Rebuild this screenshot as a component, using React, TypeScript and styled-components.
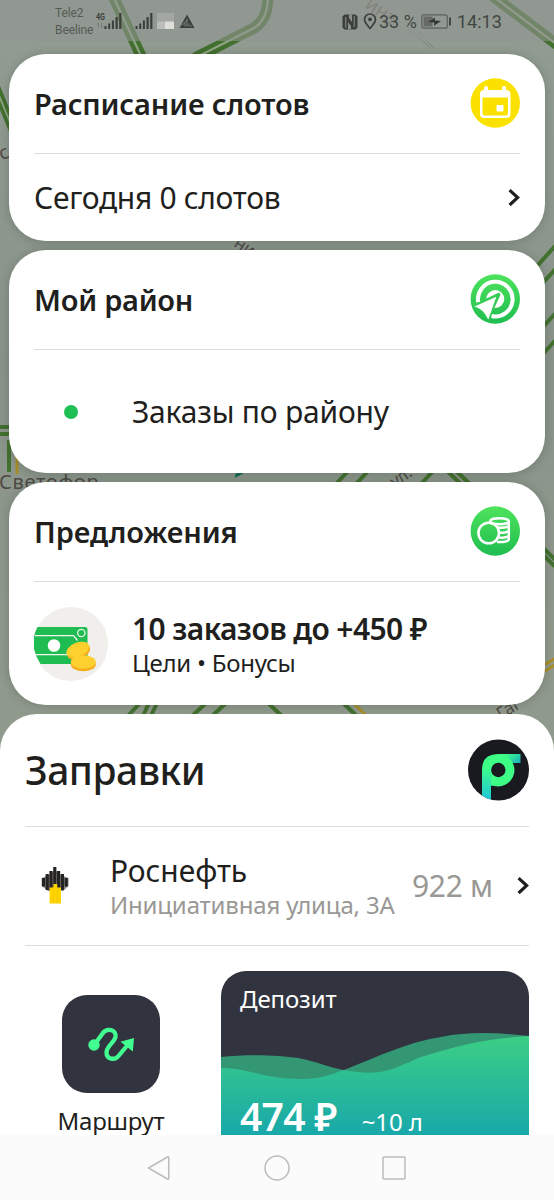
import React from "react";
import styled, { createGlobalStyle } from "styled-components";

const GlobalStyle = createGlobalStyle`
  *, *::before, *::after { box-sizing: border-box; }
  body { margin: 0; background: #89958a; }
  svg { display: block; flex: none; }
`;

const Screen = styled.div`
  position: relative;
  display: flex;
  flex-direction: column;
  width: 554px;
  height: 1200px;
  overflow: hidden;
  background: #8a958a;
  color: #1f1f1e;
  font-family: "Noto Sans", "Open Sans", sans-serif;
`;

const MapBackdrop = styled.svg`
  position: absolute;
  inset: 0;
`;

const StatusBar = styled.header`
  position: relative;
  display: flex;
  align-items: center;
  flex: none;
  height: 41px;
  padding: 2px 52px 0 55px;
  background: rgba(145, 148, 145, 0.6);
  color: #424642;
  font-family: Roboto, sans-serif;
`;

const Carriers = styled.div`
  width: 40px;
  font-size: 12px;
  line-height: 17px;
  letter-spacing: -0.1px;
  color: #555a55;
  white-space: nowrap;
`;

const StatusIcons = styled.div`
  display: flex;
  align-items: center;
  margin-top: -1px;
`;

const StatusRight = styled.div`
  display: flex;
  align-items: center;
  margin-left: auto;
`;

const StatusText = styled.span<{ $width: number; $left: number }>`
  width: ${(p) => p.$width}px;
  margin-left: ${(p) => p.$left}px;
  font-size: 18px;
  line-height: 22px;
  white-space: nowrap;
`;

const CardStack = styled.main`
  position: relative;
  display: flex;
  flex-direction: column;
  gap: 9px;
  flex: none;
  padding: 13px 9px 9px;
`;

const Card = styled.section<{ $height: number }>`
  display: flex;
  flex-direction: column;
  height: ${(p) => p.$height}px;
  padding: 0 25px;
  border-radius: 37px;
  background: #fff;
  box-shadow: 0 1px 10px rgba(20, 30, 20, 0.22);
`;

const CardHeader = styled.div<{ $height: number }>`
  display: flex;
  align-items: center;
  justify-content: space-between;
  flex: none;
  height: ${(p) => p.$height}px;
  border-bottom: 1.5px solid #dcdcdc;
`;

const HeaderIcon = styled.div`
  padding-bottom: 2px;
`;

const Text = styled.div<{ $size: number; $track?: number; $weight?: number; $color?: string; $line?: number }>`
  font-size: ${(p) => p.$size}px;
  font-weight: ${(p) => p.$weight ?? 400};
  letter-spacing: ${(p) => p.$track ?? 0}px;
  line-height: ${(p) => p.$line ?? 40}px;
  color: ${(p) => p.$color ?? "inherit"};
  white-space: nowrap;
`;

const Row = styled.div`
  display: flex;
  align-items: center;
  flex: 1;
`;

const SpacedRow = styled(Row)`
  justify-content: space-between;
`;

const Leading = styled.div<{ $width: number }>`
  display: flex;
  align-items: center;
  flex: none;
  width: ${(p) => p.$width}px;
`;

const OfferText = styled.div`
  padding-top: 2px;
`;

const Dot = styled.span`
  width: 14px;
  height: 14px;
  margin-left: 30px;
  border-radius: 50%;
  background: #1fbf54;
`;

const Panel = styled.section`
  position: relative;
  display: flex;
  flex-direction: column;
  flex: 1;
  min-height: 0;
  padding: 0 25px;
  overflow: hidden;
  border-radius: 37px 37px 0 0;
  background: #fff;
`;

const StationRow = styled.div`
  display: flex;
  align-items: center;
  flex: none;
  height: 119px;
  border-bottom: 1.5px solid #dcdcdc;
`;

const StationIcon = styled.div`
  width: 85px;
  padding: 0 0 1px 16px;
`;

const StationText = styled.div`
  padding-top: 1px;
`;

const Distance = styled.div`
  display: flex;
  align-items: center;
  justify-content: space-between;
  width: 117px;
  margin-left: auto;
`;

const Actions = styled.div`
  display: flex;
  align-items: flex-start;
  justify-content: space-between;
  padding-top: 25px;
`;

const RouteAction = styled.div`
  display: flex;
  flex-direction: column;
  align-items: center;
  gap: 12px;
  width: 172px;
  padding-top: 24px;
`;

const RouteTile = styled.div`
  display: grid;
  place-items: center;
  width: 98px;
  height: 98px;
  border-radius: 25px;
  background: #31343f;
`;

const Deposit = styled.div`
  position: relative;
  display: flex;
  flex-direction: column;
  justify-content: space-between;
  width: 308px;
  height: 169px;
  padding: 12px 19px 0;
  overflow: hidden;
  border-radius: 25px 25px 0 0;
  background: #31343f;
  color: #fff;
`;

const Waves = styled.svg`
  position: absolute;
  left: 0;
  top: 0;
`;

const DepositTitle = styled.div`
  position: relative;
`;

const Amounts = styled.div`
  position: relative;
  display: flex;
  align-items: baseline;
  gap: 25px;
`;

const NavBar = styled.nav`
  position: relative;
  display: flex;
  align-items: center;
  justify-content: space-between;
  flex: none;
  height: 65px;
  padding: 0 148px 0 147px;
  background: #fbfbfb;
`;

const Road = ({ d, width = 11 }: { d: string; width?: number }) => (
  <g fill="none">
    <path d={d} stroke="#42702f" strokeWidth={width} />
    <path d={d} stroke="#8fa585" strokeWidth={width / 5} />
  </g>
);

const MapView = () => (
  <MapBackdrop width="554" height="1200" viewBox="0 0 554 1200">
    <defs>
      <linearGradient id="land" x1="0" y1="0" x2="0" y2="720" gradientUnits="userSpaceOnUse">
        <stop offset="0" stopColor="#929d92" />
        <stop offset="0.5" stopColor="#89938a" />
        <stop offset="1" stopColor="#909a8c" />
      </linearGradient>
    </defs>
    <rect width="554" height="1200" fill="url(#land)" />
    <Road d="M113 -4L142 58" />
    <Road d="M268 -4Q268 24 248 31L195 58" />
    <Road d="M490 -6L564 50" />
    <Road d="M-4 88L14 132" width={9} />
    <path d="M412 26L435 49M408 29L431 48" stroke="#7e877f" strokeWidth="1" />
    <g fill="none" stroke="#42702f" strokeWidth="4">
      <path d="M530 274L564 236M538 288L564 260M540 330L564 304M540 357L564 331" />
      <path d="M0 427H14M0 434H14M9 440V472" />
      <path d="M335 485L351 468M355 485L371 468M420 485L436 468M446 470L462 485M455 470L471 485" />
      <path d="M540 545L564 568M540 552L564 575" />
      <path d="M126 718L140 703M142 718L149 703M150 718L157 703M190 718L206 703M210 718L226 703M268 703L284 718M343 703L359 718" />
    </g>
    <path d="M540 667L560 656M540 674L560 662M353 703L369 718M17 452V474" stroke="#a88d2a" strokeWidth="3" />
    <path d="M235 478L244 473L236 470Z" fill="#176b57" />
    <g fill="#4e4a46" fontFamily="Noto Sans, sans-serif">
      <text x="-1" y="489" fontSize="20" letterSpacing="0.7">Светофор</text>
      <text x="364" y="7" fontSize="19" transform="rotate(34 364 7)" fill="#70665f">инз</text>
      <text x="-9" y="164" fontSize="19" transform="rotate(-20 -9 164)">лс</text>
      <text x="233" y="246" fontSize="17" transform="rotate(32 233 246)">ни</text>
      <text x="395" y="488" fontSize="17" transform="rotate(-35 395 488)">ул.</text>
      <text x="501" y="720" fontSize="17" transform="rotate(-32 501 720)">Гаг</text>
    </g>
  </MapBackdrop>
);

const SignalBars = () => (
  <g fill="#3b3f3b">
    <rect x="0" y="13" width="2" height="3" />
    <rect x="3.7" y="10.5" width="2" height="5.5" />
    <rect x="7.4" y="7.5" width="2" height="8.5" />
    <rect x="11" y="4" width="2.2" height="12" />
    <rect x="14.7" y="0" width="2.2" height="16" />
  </g>
);

const CarrierIcons = () => (
  <svg width="100" height="20" viewBox="0 0 100 20">
    <text x="1" y="9" fontSize="9.5" fontWeight="700" fontFamily="Roboto, sans-serif" textLength="9" lengthAdjust="spacingAndGlyphs" fill="#3b3f3b">4G</text>
    <path d="M3.5 16.5V12M2 13.5L3.5 12M6.5 12V16.5L8 15" stroke="#777c77" fill="none" />
    <g transform="translate(9.5 2)"><SignalBars /></g>
    <g transform="translate(40.5 2)"><SignalBars /></g>
    <rect x="62" y="2" width="17" height="8.5" fill="#a3a7a3" />
    <rect x="62" y="10.5" width="8" height="7.5" fill="#bbbdb9" />
    <rect x="70" y="10.5" width="9" height="7.5" fill="#deded9" />
    <path d="M92 3.5L99.5 17H84.5Z" fill="#3b3f3b" />
    <path d="M90 15.5V12M92 15.5V7.5M94 15.5V12.5M96 15.5V14M87 14.5L92 9" stroke="#8d938d" strokeWidth="0.8" fill="none" />
  </svg>
);

const NfcIcon = () => (
  <svg width="16" height="16" viewBox="0 0 16 16">
    <path d="M2.5 0.5H13.5L15.5 2.5V13.5L13.5 15.5H2.5L0.5 13.5V2.5Z" fill="#3c403c" />
    <path d="M3.8 14V3M12.2 13V2" stroke="#8b908b" strokeWidth="1" fill="none" />
    <path d="M6 15.5V8L9 12V15.5ZM7 0.5H10V8L7 4Z" fill="#8b908b" />
  </svg>
);

const PinSvg = styled.svg`
  margin-left: 5px;
`;

const PinIcon = () => (
  <PinSvg width="14" height="17" viewBox="0 0 14 17">
    <path d="M7 15.5C4.5 12.5 1.5 9.5 1.5 6.3a5.5 5.3 0 0 1 11 0C12.5 9.5 9.5 12.5 7 15.5Z" fill="none" stroke="#3c403c" strokeWidth="1.7" />
    <circle cx="7" cy="6.3" r="1.9" fill="#3c403c" />
  </PinSvg>
);

const BatteryIcon = () => (
  <svg width="31" height="15" viewBox="0 0 31 15">
    <rect x="0.8" y="0.8" width="25.5" height="13.4" rx="2" fill="none" stroke="#5b605b" strokeWidth="1.2" />
    <rect x="2.5" y="2.5" width="9" height="10" fill="#666b66" />
    <rect x="28" y="3.5" width="2" height="8" fill="#454945" />
    <path d="M7 8L14 3.5L13.7 6.5L20 7L13 11.7L13.3 8.5Z" fill="#333733" />
  </svg>
);

const CalendarIcon = () => (
  <svg width="50" height="50" viewBox="0 0 50 50">
    <circle cx="25.3" cy="25" r="24.7" fill="#fae100" />
    <rect x="10" y="12" width="30.5" height="28" rx="4" fill="#fff" />
    <rect x="14" y="8" width="4" height="8" rx="2" fill="#fff" />
    <rect x="32" y="8" width="4" height="8" rx="2" fill="#fff" />
    <path d="M12.5 19.5H38V35.5a2 2 0 0 1-2 2H14.5a2 2 0 0 1-2-2Z" fill="#fae100" />
    <rect x="26.5" y="27" width="7" height="6.5" rx="1" fill="#fff" />
  </svg>
);

const RadarIcon = () => (
  <svg width="50" height="50" viewBox="0 0 50 50">
    <defs>
      <linearGradient id="radar" x1="0" y1="0" x2="0" y2="1">
        <stop stopColor="#4ee35c" />
        <stop offset="1" stopColor="#1fbd50" />
      </linearGradient>
    </defs>
    <circle cx="25.3" cy="25" r="24.7" fill="url(#radar)" />
    <path d="M8.3 28.3A17.3 17.3 0 1 1 21.5 42" fill="none" stroke="#fff" strokeWidth="4" />
    <circle cx="25.3" cy="25" r="9" fill="#fff" />
    <path d="M28.7 20.5L7 31L14 36.5L18.3 43Z" fill="#36cc55" stroke="#36cc55" strokeWidth="3.4" strokeLinejoin="round" />
    <path d="M26.3 22.8L4 32.7C11 34 14.5 38 18.3 45.5Z" fill="#fff" />
  </svg>
);

const CoinsIcon = () => (
  <svg width="50" height="50" viewBox="0 0 50 50">
    <circle cx="25.3" cy="25" r="24.7" fill="url(#radar)" />
    <g fill="none" stroke="#fff" strokeWidth="2.5">
      <ellipse cx="29.5" cy="15.3" rx="9.3" ry="3" />
      <path d="M20.2 15.3V17M38.8 15.3V33C38.8 35.3 34 36.5 27 36" />
      <path d="M38 20.2Q36 22.3 27.5 21.5M38 25.2Q36 27.2 30 26.5M38 30.2Q36 32.2 29 31.5" />
      <circle cx="18.7" cy="27" r="10.3" />
    </g>
  </svg>
);

const ChevronIcon = () => (
  <svg width="12" height="20" viewBox="0 0 12 20">
    <path d="M1.6 2.2L9.6 9.6L1.6 17" fill="none" stroke="#1f1f1e" strokeWidth="3.2" />
  </svg>
);

const MoneyIcon = () => (
  <svg width="74" height="74" viewBox="0 0 74 74">
    <circle cx="37" cy="37" r="37" fill="#f0efec" />
    <path d="M3.5 20H51Q53.5 20 53.5 22.5V57H6.5Q-6 38 3.5 20Z" fill="#1fbd51" />
    <path d="M1 28.7H39.5L43.5 33.5M2 47.7H39" fill="none" stroke="#f5f5f2" strokeWidth="1.3" />
    <circle cx="20" cy="38.5" r="6.3" fill="#fff" />
    <circle cx="47.3" cy="26" r="3.7" fill="none" stroke="#e9f4e9" strokeWidth="1.3" />
    <g transform="rotate(-22 44 43)">
      <ellipse cx="44" cy="44.8" rx="12" ry="7.2" fill="#f4ad1c" />
      <ellipse cx="44" cy="42.5" rx="12" ry="7" fill="#fed02f" />
    </g>
    <ellipse cx="49.3" cy="57.5" rx="12.5" ry="6.7" fill="#f4ad1c" />
    <ellipse cx="49.3" cy="55" rx="12.5" ry="6.7" fill="#fed02f" />
  </svg>
);

const FuelLogo = () => (
  <svg width="62" height="62" viewBox="0 0 62 62">
    <defs>
      <linearGradient id="stem" x1="0" y1="20" x2="0" y2="60" gradientUnits="userSpaceOnUse">
        <stop offset="0.2" stopColor="#3dff86" />
        <stop offset="1" stopColor="#1fc6d8" />
      </linearGradient>
      <linearGradient id="flag" x1="39" y1="15" x2="50" y2="27" gradientUnits="userSpaceOnUse">
        <stop stopColor="#3dff86" />
        <stop offset="1" stopColor="#19aebe" />
      </linearGradient>
      <clipPath id="logoClip"><circle cx="31.5" cy="31" r="30.5" /></clipPath>
    </defs>
    <g clipPath="url(#logoClip)">
      <rect width="62" height="62" fill="#191a20" />
      <path d="M31 15H53.5V24H42Z" fill="url(#flag)" />
      <path d="M15 62V31Q15 15 31 15V40L24 46V62Z" fill="url(#stem)" />
      <path d="M24 36L33 47H24Z" fill="#22bc89" />
      <path d="M31 15A16.2 16.2 0 1 1 24 45.7V31Z" fill="#3dff86" />
      <circle cx="31.3" cy="31" r="7.2" fill="#191a20" />
    </g>
  </svg>
);

const derrick = [
  [0, 11, 19.5], [3.8, 7, 23], [7.6, 4, 24], [11.4, 0, 22], [15.2, 4, 24], [19, 7, 23], [22.8, 11, 19.5],
];

const RosneftIcon = () => (
  <svg width="28" height="39" viewBox="0 0 28 39">
    <path d="M1 12V20L7 25H22L27.5 20V12L20 9L14 4L8 9Z" fill="#8b8a88" />
    {derrick.map(([x, top, bottom]) => (
      <rect key={x} x={x + 0.8} y={top + 1} width="3.2" height={bottom - top} fill="#252422" />
    ))}
    <path d="M8.6 21.5H12.4V18H16.2V21.5H20V37.5H8.6Z" fill="#ffd400" />
    <path d="M12.3 21V37.5M16.3 21V37.5" stroke="#f3c400" strokeWidth="0.6" />
  </svg>
);

const RouteIcon = () => (
  <svg width="48" height="36" viewBox="0 0 48 36">
    <g fill="#42ff91">
      <circle cx="7" cy="19" r="5.7" />
      <path d="M33.5 15.7L47 12L45.8 25.5Z" />
    </g>
    <path d="M8 18L15.5 7.5C19.5 1.5 30 3.5 28.5 11C27 17 19.5 20 19.5 26.5C19.5 33.5 28 34.5 31.5 30L41 18.5" fill="none" stroke="#42ff91" strokeWidth="4.3" />
  </svg>
);

const DepositWaves = () => (
  <Waves width="308" height="172" viewBox="0 0 308 172">
    <defs>
      <linearGradient id="water" x1="0" y1="62" x2="0" y2="165" gradientUnits="userSpaceOnUse">
        <stop stopColor="#3dd083" />
        <stop offset="0.5" stopColor="#2abb98" />
        <stop offset="1" stopColor="#18a8ab" />
      </linearGradient>
    </defs>
    <path d="M0 86C25 83 59 84 77 87C98 91 106 96 123 99C158 85 187 71 220 66C250 60 281 62 308 65V172H0Z" fill="#349774" />
    <path d="M0 97C28 97 42 108 80 108C105 108 115 101 123 99C171 108 177 92 210 83C240 74 269 67 308 65V172H0Z" fill="url(#water)" />
  </Waves>
);

const BackIcon = () => (
  <svg width="24" height="28" viewBox="0 0 24 28">
    <path d="M1.5 14L20.5 3Q21.8 2.3 21.8 4V24Q21.8 25.7 20.5 25Z" fill="none" stroke="#bcbcbc" strokeWidth="1.5" strokeLinejoin="round" />
  </svg>
);

const HomeIcon = () => (
  <svg width="26" height="26" viewBox="0 0 26 26">
    <circle cx="13" cy="13" r="12" fill="none" stroke="#bcbcbc" strokeWidth="1.5" />
  </svg>
);

const RecentIcon = () => (
  <svg width="24" height="24" viewBox="0 0 24 24">
    <rect x="1" y="1" width="22" height="22" rx="1" fill="none" stroke="#bcbcbc" strokeWidth="1.5" />
  </svg>
);

export default function App() {
  return (
    <Screen>
      <GlobalStyle />
      <MapView />
      <StatusBar>
        <Carriers>
          <div>Tele2</div>
          <div>Beeline</div>
        </Carriers>
        <StatusIcons>
          <CarrierIcons />
        </StatusIcons>
        <StatusRight>
          <NfcIcon />
          <PinIcon />
          <StatusText $left={2} $width={42}>33 %</StatusText>
          <BatteryIcon />
          <StatusText $left={5} $width={45}>14:13</StatusText>
        </StatusRight>
      </StatusBar>

      <CardStack>
        <Card $height={187}>
          <CardHeader $height={100}>
            <Text $size={29} $weight={600} $track={-0.16}>Расписание слотов</Text>
            <HeaderIcon><CalendarIcon /></HeaderIcon>
          </CardHeader>
          <SpacedRow>
            <Text $size={30} $track={-0.3}>Сегодня 0 слотов</Text>
            <ChevronIcon />
          </SpacedRow>
        </Card>

        <Card $height={223}>
          <CardHeader $height={100}>
            <Text $size={29} $weight={600} $track={-0.25}>Мой район</Text>
            <HeaderIcon><RadarIcon /></HeaderIcon>
          </CardHeader>
          <Row>
            <Leading $width={98}><Dot /></Leading>
            <Text $size={30} $track={-0.2}>Заказы по району</Text>
          </Row>
        </Card>

        <Card $height={223}>
          <CardHeader $height={100}>
            <Text $size={29} $weight={600} $track={-0.08}>Предложения</Text>
            <HeaderIcon><CoinsIcon /></HeaderIcon>
          </CardHeader>
          <Row>
            <Leading $width={98}><MoneyIcon /></Leading>
            <OfferText>
              <Text $size={30} $weight={600} $track={-0.6} $line={36}>10 заказов до +450 ₽</Text>
              <Text $size={24} $track={-0.25} $line={32}>Цели • Бонусы</Text>
            </OfferText>
          </Row>
        </Card>
      </CardStack>

      <Panel>
        <CardHeader $height={113}>
          <Text $size={39} $weight={500} $track={-0.5} $line={50}>Заправки</Text>
          <FuelLogo />
        </CardHeader>
        <StationRow>
          <StationIcon><RosneftIcon /></StationIcon>
          <StationText>
            <Text $size={30} $track={-0.05} $line={36}>Роснефть</Text>
            <Text $size={24} $track={-0.15} $line={32} $color="#999895">Инициативная улица, 3А</Text>
          </StationText>
          <Distance>
            <Text $size={30} $track={-0.3} $color="#999895">922 м</Text>
            <ChevronIcon />
          </Distance>
        </StationRow>
        <Actions>
          <RouteAction>
            <RouteTile><RouteIcon /></RouteTile>
            <Text $size={24} $track={-0.2} $line={32}>Маршрут</Text>
          </RouteAction>
          <Deposit>
            <DepositWaves />
            <DepositTitle>
              <Text $size={24} $track={-0.1} $line={32}>Депозит</Text>
            </DepositTitle>
            <Amounts>
              <Text $size={39} $weight={600} $track={-0.7} $line={48}>474 ₽</Text>
              <Text $size={24} $track={-0.1} $line={32}>~10 л</Text>
            </Amounts>
          </Deposit>
        </Actions>
      </Panel>

      <NavBar>
        <BackIcon />
        <HomeIcon />
        <RecentIcon />
      </NavBar>
    </Screen>
  );
}
